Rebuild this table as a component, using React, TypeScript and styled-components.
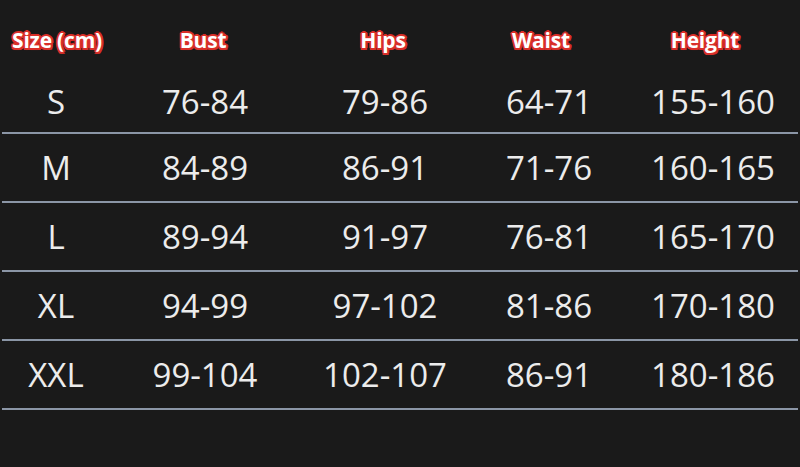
import { FC } from 'react';
import styled, { createGlobalStyle } from 'styled-components';

const GlobalStyle = createGlobalStyle`
  html, body {
    margin: 0;
    padding: 0;
    background: #1a1a1a;
  }
  body {
    font-family: "Open Sans", "Noto Sans", sans-serif;
  }
`;

const Page = styled.div`
  width: 800px;
  height: 467px;
  background-color: #1a1a1a;
  padding: 0 2px;
  box-sizing: border-box;
  overflow: hidden;
`;

const Row = styled.div<{ $height: number; $lined?: boolean; $head?: boolean }>`
  display: grid;
  grid-template-columns: ${({ $head }) =>
    $head ? '110px 182px 178px 138px 190px' : '108px 190px 170px 158px 170px'};
  align-items: center;
  height: ${({ $height }) => $height}px;
  border-bottom: ${({ $lined }) => ($lined ? '2px solid #8b96a6' : 'none')};
`;

const HeadCell = styled.div`
  text-align: center;
  font-size: 21px;
  font-weight: 700;
  color: #ffffff;
  letter-spacing: -0.2px;
  padding-top: 10px;
  text-shadow:
    2px 0 0 #d92f29, -2px 0 0 #d92f29, 0 2px 0 #d92f29, 0 -2px 0 #d92f29,
    1.5px 1.5px 0 #d92f29, -1.5px 1.5px 0 #d92f29, 1.5px -1.5px 0 #d92f29,
    -1.5px -1.5px 0 #d92f29, 0 0 3px #c8201c;
`;

const Cell = styled.div`
  text-align: center;
  font-size: 33px;
  color: #ececec;
  line-height: 1;
`;

const headers = ['Size (cm)', 'Bust', 'Hips', 'Waist', 'Height'];

const rows = [
  ['S', '76-84', '79-86', '64-71', '155-160'],
  ['M', '84-89', '86-91', '71-76', '160-165'],
  ['L', '89-94', '91-97', '76-81', '165-170'],
  ['XL', '94-99', '97-102', '81-86', '170-180'],
  ['XXL', '99-104', '102-107', '86-91', '180-186'],
];

const App: FC = () => {
  return (
    <>
      <GlobalStyle />
      <Page>
        <Row $height={70} $head>
          {headers.map((h) => (
            <HeadCell key={h}>{h}</HeadCell>
          ))}
        </Row>
        {rows.map((r, i) => (
          <Row key={r[0]} $height={i === 0 ? 62 : 67} $lined>
            {r.map((v, j) => (
              <Cell key={j}>{v}</Cell>
            ))}
          </Row>
        ))}
      </Page>
    </>
  );
};

export default App;
